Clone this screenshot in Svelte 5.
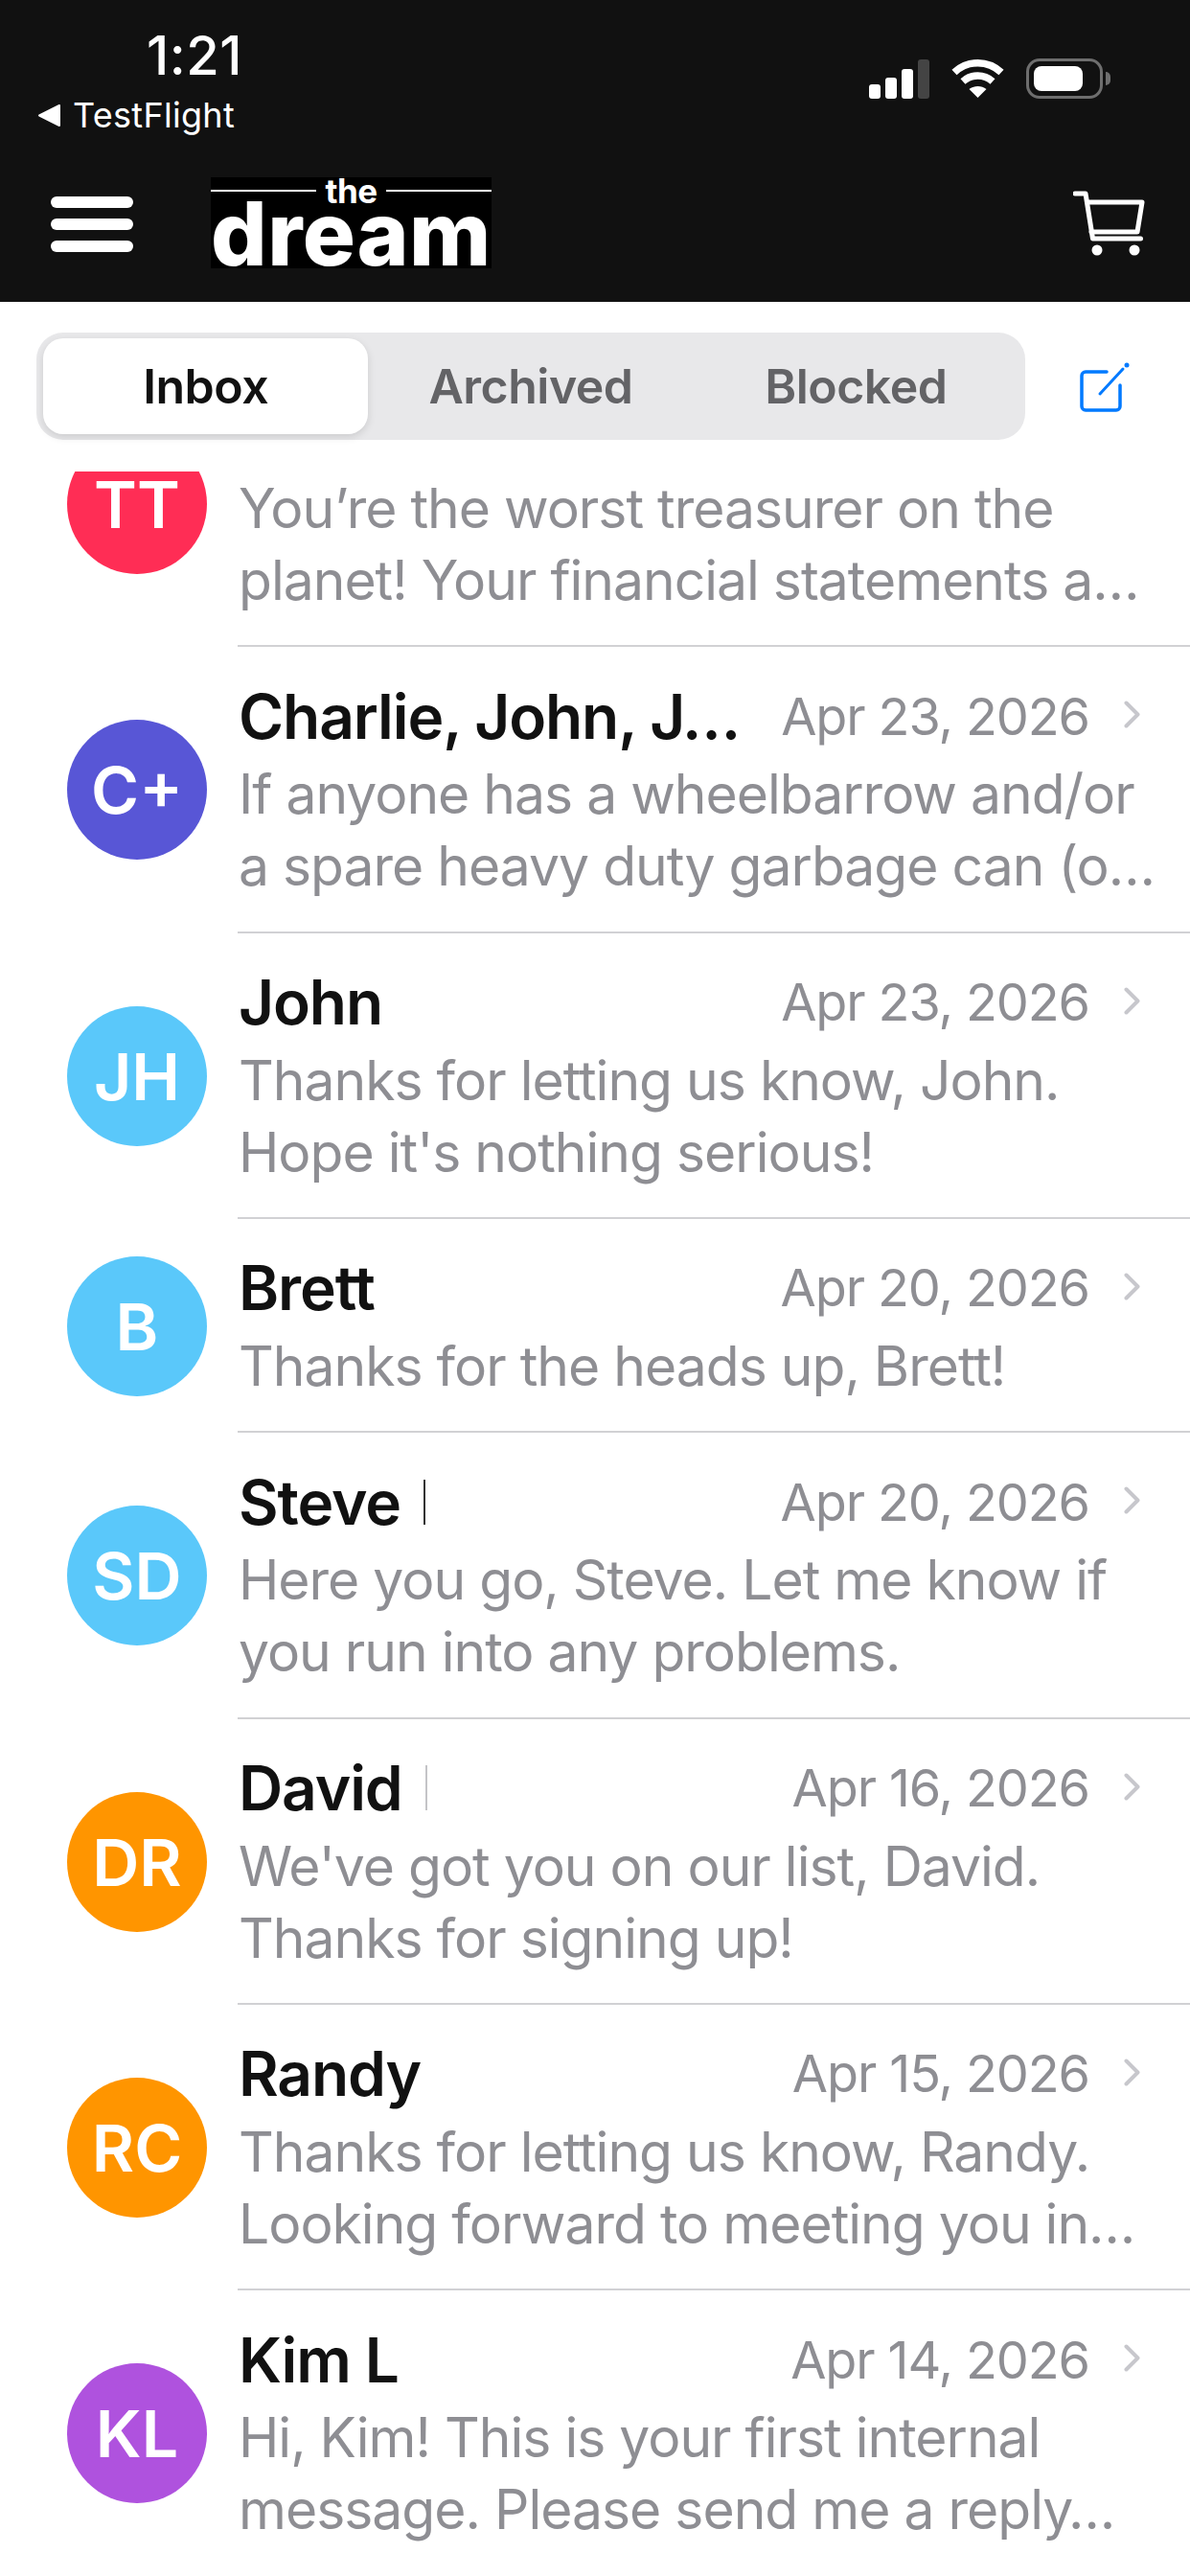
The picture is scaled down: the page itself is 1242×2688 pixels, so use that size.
<script>
	const rows = [
		{ initials: 'TT', color: '#ff2d55', name: '', date: '', lines: ['You’re the worst treasurer on the', 'planet! Your financial statements a…'] },
		{ initials: 'C+', color: '#5856d6', name: 'Charlie, John, J…', date: 'Apr 23, 2026', lines: ['If anyone has a wheelbarrow and/or', 'a spare heavy duty garbage can (o…'] },
		{ initials: 'JH', color: '#5ac8fa', name: 'John', date: 'Apr 23, 2026', lines: ['Thanks for letting us know, John.', "Hope it's nothing serious!"] },
		{ initials: 'B', color: '#5ac8fa', name: 'Brett', date: 'Apr 20, 2026', lines: ['Thanks for the heads up, Brett!'] },
		{ initials: 'SD', color: '#5ac8fa', name: 'Steve', mark: 'dark', date: 'Apr 20, 2026', lines: ['Here you go, Steve. Let me know if', 'you run into any problems.'] },
		{ initials: 'DR', color: '#ff9500', name: 'David', mark: 'light', date: 'Apr 16, 2026', lines: ["We've got you on our list, David.", 'Thanks for signing up!'] },
		{ initials: 'RC', color: '#ff9500', name: 'Randy', date: 'Apr 15, 2026', lines: ['Thanks for letting us know, Randy.', 'Looking forward to meeting you in…'] },
		{ initials: 'KL', color: '#af52de', name: 'Kim L', date: 'Apr 14, 2026', lines: ['Hi, Kim! This is your first internal', 'message. Please send me a reply…'] }
	];

	const tabs = ['Inbox', 'Archived', 'Blocked'];
	let active = $state(0);
</script>

<div class="screen">
	<header class="top">
		<div class="status">
			<div class="status-left">
				<div class="time">1:21</div>
				<div class="back">
					<svg class="back-arrow" viewBox="0 0 22 22"><path d="M21 1v20L1 11z" fill="#fff" stroke="#fff" stroke-linejoin="round" stroke-width="2" /></svg>
					<span>TestFlight</span>
				</div>
			</div>
			<div class="status-right">
				<div class="signal">
					<i class="s1"></i><i class="s2"></i><i class="s3"></i><i class="s4"></i>
				</div>
				<svg class="wifi" viewBox="0 0 55 40" fill="none" stroke="#fff" stroke-width="7.5">
					<path d="M3 13.5C17 .5 38 .5 52 13.5" />
					<path d="M12 23c9-8 22-8 31 0" />
					<path d="M27.5 40l-9-9c5-4 13-4 18 0z" fill="#fff" stroke="none" />
				</svg>
				<div class="battery"><div class="charge"></div></div>
				<div class="nub"></div>
			</div>
		</div>
		<nav class="nav">
			<div class="burger"><span></span><span></span><span></span></div>
			<div class="logo">
				<div class="logo-top"><span class="rule"></span><span class="the">the</span><span class="rule"></span></div>
				<div class="dream">dream</div>
			</div>
			<svg class="cart" viewBox="0 0 75 68" fill="none" stroke="#fff" stroke-width="5" stroke-linecap="round" stroke-linejoin="round">
				<path d="M2 3h11l7.500 47h50" />
				<path d="M15 12h57l-5 31H19" />
				<circle cx="25" cy="62" r="5.500" fill="#fff" stroke="none" />
				<circle cx="64" cy="62" r="5.500" fill="#fff" stroke="none" />
			</svg>
		</nav>
	</header>

	<div class="toolbar">
		<div class="segments">
			{#each tabs as tab, i}
				<button class="segment" class:active={i === active} onclick={() => (active = i)}>{tab}</button>
			{/each}
		</div>
		<svg class="compose" viewBox="0 0 52 52" fill="none" stroke="#007aff" stroke-width="3.500" stroke-linecap="round" stroke-linejoin="round">
			<path d="M28 10H6a4 4 0 0 0-4 4v32a4 4 0 0 0 4 4h32a4 4 0 0 0 4-4V24" />
			<path d="M21 33L45 7" stroke-width="3" />
			<circle cx="49" cy="3" r="2.500" fill="#007aff" stroke="none" />
		</svg>
	</div>

	<div class="list">
		<div class="list-inner">
			{#each rows as row}
				<div class="row">
					<div class="avatar" style="background: {row.color}">{row.initials}</div>
					<div class="content">
						<div class="head">
							<span class="name">{row.name}</span>
							{#if row.mark}<span class="mark {row.mark}"></span>{/if}
							<span class="date">{row.date}</span>
							{#if row.date}
								<svg class="chevron" viewBox="0 0 17 29" fill="none" stroke="#c7c7cc" stroke-width="4" stroke-linecap="round" stroke-linejoin="round"><path d="M2.500 2.500l12 12-12 12" /></svg>
							{/if}
						</div>
						{#each row.lines as line}
							<div class="line">{line}</div>
						{/each}
					</div>
				</div>
			{/each}
		</div>
	</div>
</div>

<style>
	:global(body) {
		margin: 0;
		background: #fff;
	}

	.screen {
		width: 1242px;
		height: 2688px;
		overflow: hidden;
		display: flex;
		flex-direction: column;
		font-family: Inter, 'Liberation Sans', sans-serif;
		background: #fff;
	}

	.top {
		height: 315px;
		flex: none;
		background: #111;
		color: #fff;
	}

	.status {
		height: 160px;
		display: flex;
		justify-content: space-between;
		align-items: flex-start;
	}

	.status-left {
		padding: 32px 0 0 40px;
	}

	.time {
		font-size: 56px;
		line-height: 52px;
		font-weight: 500;
		margin-left: 113px;
		letter-spacing: 0.5px;
	}

	.back {
		display: flex;
		align-items: center;
		gap: 13px;
		margin-top: 16px;
		font-size: 36px;
		line-height: 40px;
		letter-spacing: 0.3px;
	}

	.back-arrow {
		width: 23px;
		height: 23px;
	}

	.status-right {
		display: flex;
		align-items: center;
		margin: 61px 83px 0 0;
	}

	.signal {
		display: flex;
		align-items: flex-end;
		gap: 5px;
		height: 41px;
	}

	.signal i {
		width: 12px;
		background: #fff;
		border-radius: 3px;
	}

	.s1 {
		height: 15px;
	}

	.s2 {
		height: 22px;
	}

	.s3 {
		height: 31px;
	}

	.signal .s4 {
		height: 41px;
		background: #444;
	}

	.wifi {
		width: 55px;
		height: 40px;
		margin-left: 23px;
	}

	.battery {
		box-sizing: border-box;
		width: 80px;
		height: 42px;
		margin-left: 23px;
		padding: 5px;
		border: 3px solid #6e6e6e;
		border-radius: 14px;
	}

	.charge {
		width: 51px;
		height: 100%;
		background: #fff;
		border-radius: 8px;
	}

	.nub {
		width: 5px;
		height: 14px;
		margin-left: 3px;
		background: #6e6e6e;
		border-radius: 0 6px 6px 0;
	}

	.nav {
		display: flex;
		align-items: flex-start;
		padding: 25px 47px 0 53px;
	}

	.burger {
		display: flex;
		flex-direction: column;
		gap: 11px;
		width: 86px;
		margin-top: 20px;
	}

	.burger span {
		height: 12px;
		background: #fff;
		border-radius: 6px;
	}

	.logo {
		width: 293px;
		height: 95px;
		margin-left: 81px;
		background: #000;
	}

	.logo-top {
		display: flex;
		align-items: center;
		gap: 9px;
		height: 28px;
	}

	.rule {
		flex: 1;
		height: 2px;
		background: #fff;
	}

	.the {
		font-size: 35px;
		line-height: 28px;
		font-weight: 700;
		letter-spacing: -0.5px;
	}

	.dream {
		font-size: 92px;
		line-height: 62px;
		font-weight: 800;
		letter-spacing: 0.5px;
		text-align: center;
		white-space: nowrap;
	}

	.cart {
		width: 75px;
		height: 68px;
		margin: 14px 0 0 auto;
	}

	.toolbar {
		height: 177px;
		flex: none;
		display: flex;
		align-items: flex-start;
		box-sizing: border-box;
		padding: 32px 0 0 38px;
	}

	.segments {
		box-sizing: border-box;
		width: 1032px;
		height: 112px;
		padding: 6px 7px;
		display: grid;
		grid-template-columns: repeat(3, 1fr);
		background: #e8e8ea;
		border-radius: 28px;
	}

	.segment {
		border: none;
		background: none;
		padding: 0;
		font-family: inherit;
		font-size: 50px;
		font-weight: 600;
		letter-spacing: -0.5px;
		color: #636366;
	}

	.segment.active {
		background: #fff;
		color: #111;
		border-radius: 21px;
		box-shadow: 0 3px 8px rgba(0, 0, 0, 0.12);
	}

	.compose {
		width: 52px;
		height: 52px;
		margin: 31px 0 0 57px;
	}

	.list {
		flex: 1;
		overflow: hidden;
	}

	.list-inner {
		margin-top: -115px;
	}

	.row {
		position: relative;
		display: flex;
		align-items: center;
		padding-left: 70px;
	}

	.row::after {
		content: '';
		position: absolute;
		left: 248px;
		right: 0;
		bottom: 0;
		height: 2px;
		background: #d1d1d4;
	}

	.row:last-child::after {
		display: none;
	}

	.avatar {
		flex: none;
		width: 146px;
		height: 146px;
		border-radius: 50%;
		display: flex;
		align-items: center;
		justify-content: center;
		font-size: 68px;
		font-weight: 600;
		color: #fff;
	}

	.content {
		flex: 1;
		min-width: 0;
		padding: 30px 0 32.33px 33px;
	}

	.head {
		display: flex;
		align-items: center;
		height: 84px;
		margin-bottom: 2px;
		padding-right: 52px;
	}

	.name {
		font-size: 64px;
		font-weight: 600;
		letter-spacing: -1.1px;
		color: #111;
		white-space: nowrap;
	}

	.mark {
		width: 2px;
		height: 47px;
		margin-left: 24px;
	}

	.mark.dark {
		background: #333;
	}

	.mark.light {
		background: #c4c4c7;
	}

	.date {
		margin-left: auto;
		font-size: 54px;
		letter-spacing: -1.1px;
		color: #8e8e93;
		white-space: nowrap;
	}

	.chevron {
		width: 17px;
		height: 29px;
		margin: -3px 0 0 36px;
	}

	.line {
		font-size: 57px;
		line-height: 75px;
		letter-spacing: -1px;
		color: #8e8e93;
		white-space: nowrap;
	}
</style>
